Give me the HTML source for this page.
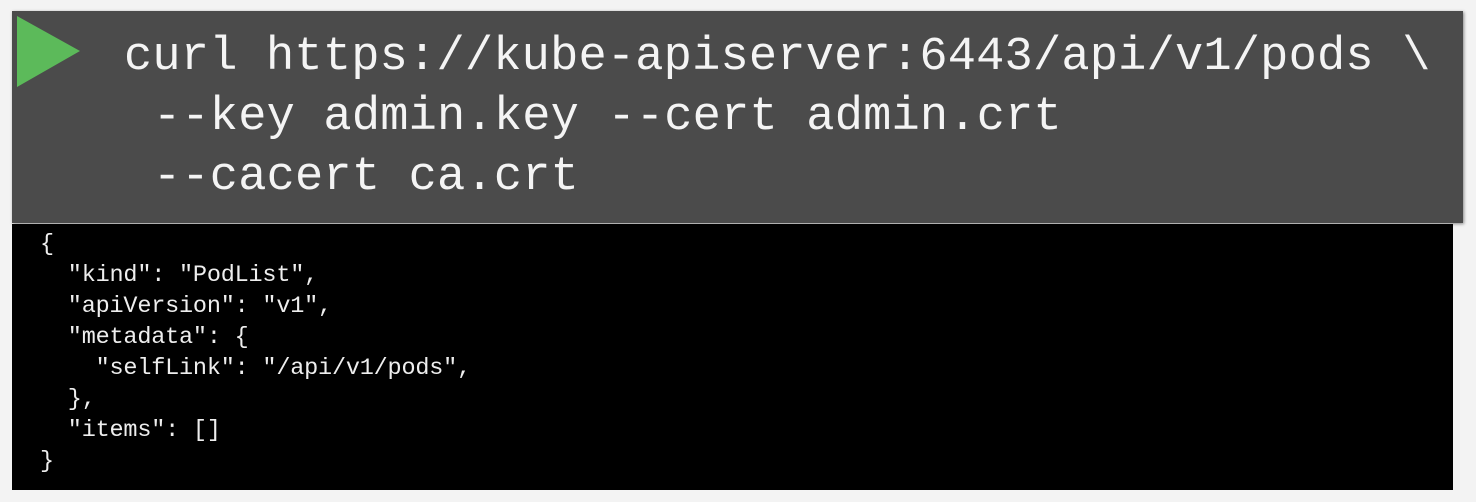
<html><head><style>
body{margin:0;width:1476px;height:502px;background:#f3f3f3;position:relative;overflow:hidden}
.g{position:absolute;left:12px;top:11px;width:1451px;height:212px;background:#4b4b4b;box-shadow:1px 1px 3px #888}
.b{position:absolute;left:12px;top:224px;width:1441px;height:266px;background:#000}
.t{position:absolute;font-family:"Liberation Mono",monospace;color:#f4f4f4;font-size:47px;white-space:pre;letter-spacing:0.2px}
.j{position:absolute;left:40px;top:229px;font-family:"Liberation Mono",monospace;color:#eee;font-size:23.5px;line-height:31px;white-space:pre;letter-spacing:-0.2px}
</style></head><body>
<div class="g"></div>
<svg style="position:absolute;left:0;top:0" width="100" height="100"><polygon points="17,16 80,51 17,87" fill="#5cba5a"/></svg>
<div class="t" style="left:124px;top:31px">curl https://kube-apiserver:6443/api/v1/pods \</div>
<div class="t" style="left:153px;top:91px">--key admin.key --cert admin.crt</div>
<div class="t" style="left:153px;top:151px">--cacert ca.crt</div>
<div class="b"></div>
<div class="j">{
  "kind": "PodList",
  "apiVersion": "v1",
  "metadata": {
    "selfLink": "/api/v1/pods",
  },
  "items": []
}</div>
</body></html>
